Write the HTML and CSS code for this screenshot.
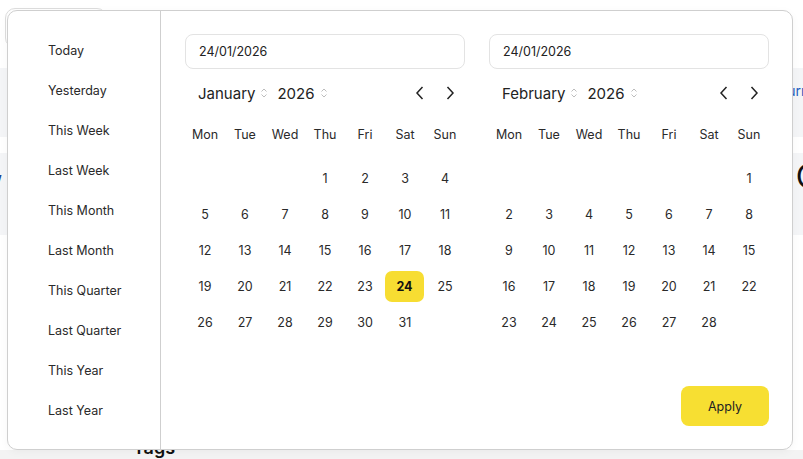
FILE: index.html
```html
<!DOCTYPE html>
<html lang="en">
<head>
  <meta charset="UTF-8" />
  <title>Date Range</title>
  <link rel="stylesheet" href="styles.css">
</head>
<body>

  <div class="page">
    <div class="toolbar">
      <div class="search"></div>
    </div>
    <div class="band band-top">
      <span class="link">Current</span>
    </div>
    <div class="band band-mid">
      <span class="link-left">view</span>
      <span class="big-icon">C</span>
    </div>
    <div class="tags">
      <h3>Tags</h3>
    </div>
  </div>

  <!-- range picker popover -->
  <div class="picker">
    <ul class="presets">
      <li>Today</li>
      <li>Yesterday</li>
      <li>This Week</li>
      <li>Last Week</li>
      <li>This Month</li>
      <li>Last Month</li>
      <li>This Quarter</li>
      <li>Last Quarter</li>
      <li>This Year</li>
      <li>Last Year</li>
    </ul>

    <div class="panel">
      <div class="months">
        <div class="month" id="m1">
          <div class="date-input">24/01/2026</div>
          <div class="month-head">
            <span class="sel">January <svg class="updown" viewBox="0 0 8 12"><path d="M1.5 4.5 4 2l2.5 2.5M1.5 7.5 4 10l2.5-2.5"/></svg></span>
            <span class="sel">2026 <svg class="updown" viewBox="0 0 8 12"><path d="M1.5 4.5 4 2l2.5 2.5M1.5 7.5 4 10l2.5-2.5"/></svg></span>
            <span class="nav">
              <button class="arrow"><svg viewBox="0 0 10 16"><path d="M7.5 2 2 8l5.5 6"/></svg></button>
              <button class="arrow"><svg viewBox="0 0 10 16"><path d="M2.5 2 8 8l-5.5 6"/></svg></button>
            </span>
          </div>
          <div class="weekdays"></div>
          <div class="days"></div>
        </div>

        <div class="month" id="m2">
          <div class="date-input">24/01/2026</div>
          <div class="month-head">
            <span class="sel">February <svg class="updown" viewBox="0 0 8 12"><path d="M1.5 4.5 4 2l2.5 2.5M1.5 7.5 4 10l2.5-2.5"/></svg></span>
            <span class="sel">2026 <svg class="updown" viewBox="0 0 8 12"><path d="M1.5 4.5 4 2l2.5 2.5M1.5 7.5 4 10l2.5-2.5"/></svg></span>
            <span class="nav">
              <button class="arrow"><svg viewBox="0 0 10 16"><path d="M7.5 2 2 8l5.5 6"/></svg></button>
              <button class="arrow"><svg viewBox="0 0 10 16"><path d="M2.5 2 8 8l-5.5 6"/></svg></button>
            </span>
          </div>
          <div class="weekdays"></div>
          <div class="days"></div>
        </div>
      </div>

      <div class="actions">
        <button class="apply">Apply</button>
      </div>
    </div>
  </div>

  <script>
    const names = ["Mon", "Tue", "Wed", "Thu", "Fri", "Sat", "Sun"];

    function buildMonth(el, offset, count, selected) {
      const head = el.querySelector(".weekdays");
      const grid = el.querySelector(".days");
      names.forEach(d => {
        const c = document.createElement("div");
        c.className = "wd";
        c.textContent = d;
        head.appendChild(c);
      });
      for (let i = 0; i < offset; i++) {
        grid.appendChild(document.createElement("div"));
      }
      for (let n = 1; n <= count; n++) {
        const c = document.createElement("div");
        c.className = "day" + (n === selected ? " active" : "");
        c.textContent = n;
        grid.appendChild(c);
      }
    }

    // Jan 2026 starts on a Thursday, Feb 2026 on a Sunday
    buildMonth(document.getElementById("m1"), 3, 31, 24);
    buildMonth(document.getElementById("m2"), 6, 28, 0);
  </script>
</body>
</html>
```

FILE: styles.css
```css
* {
  box-sizing: border-box;
}

html, body {
  margin: 0;
  padding: 0;
  font-family: 'Inter', sans-serif;
  background: #fff;
  color: #222;
  height: 100%;
  overflow: hidden;
}

.page {
  padding-top: 8px;
}

.toolbar {
  height: 60px;
}

.search {
  margin-left: 5px;
  width: 102px;
  height: 40px;
  border: 1px solid #ddd;
  border-radius: 10px;
}

.band {
  background: #f4f5f7;
  display: flex;
  justify-content: space-between;
  align-items: center;
}

.band-top {
  height: 69px;
}

.band-mid {
  margin-top: 16px;
  height: 82px;
}

.link {
  margin-left: auto;
  margin-right: -24px;
  margin-top: -24px;
  color: #1d5fc2;
  font-size: 14px;
}

.link-left {
  margin-left: -30px;
  margin-top: -34px;
  color: #1d3f8f;
  font-size: 14px;
  font-weight: 600;
}

.big-icon {
  margin-right: -16px;
  margin-top: -36px;
  font-size: 32px;
  color: #111;
}

.tags {
  margin-top: 203px;
  height: 40px;
  background: linear-gradient(#fff 0, #fff 12px, #f3f3f3 12px);
}

.tags h3 {
  margin: 0 0 0 133px;
  font-size: 18px;
  line-height: 20px;
  font-weight: 600;
  color: #111;
}

/* popover */
.picker {
  position: absolute;
  left: 7px;
  top: 10px;
  width: 786px;
  height: 440px;
  display: flex;
  background: #fff;
  border: 1px solid #cfcfcf;
  border-radius: 10px;
  box-shadow: 0 2px 8px rgba(0, 0, 0, 0.04);
}

.presets {
  list-style: none;
  margin: 0;
  padding: 20px 0 0 40px;
  width: 153px;
  border-right: 1px solid #cfcfcf;
}

.presets li {
  height: 40px;
  line-height: 40px;
  font-size: 12.5px;
  color: #2a2a2a;
}

.panel {
  flex: 1;
  display: flex;
  flex-direction: column;
  padding: 23px 23px 23px 24px;
}

.months {
  display: flex;
  gap: 24px;
}

.month {
  width: 280px;
}

.date-input {
  height: 35px;
  border: 1px solid #e3e3e3;
  border-radius: 8px;
  padding: 0 13px;
  line-height: 33px;
  font-size: 12.5px;
  color: #222;
}

.month-head {
  margin-top: 6px;
  height: 36px;
  display: flex;
  align-items: center;
  padding-left: 13px;
  font-size: 15px;
  color: #222;
}

.sel {
  display: flex;
  align-items: center;
  gap: 5px;
  margin-right: 9px;
}

.updown {
  width: 8px;
  height: 12px;
  fill: none;
  stroke: #b5b5b5;
  stroke-width: 0.9;
}

.nav {
  margin-left: auto;
  display: flex;
}

.arrow {
  width: 30px;
  height: 30px;
  padding: 0;
  border: none;
  background: none;
  display: flex;
  align-items: center;
  justify-content: center;
}

.arrow svg {
  width: 10px;
  height: 16px;
  fill: none;
  stroke: #222;
  stroke-width: 1.5;
}

.weekdays,
.days {
  display: grid;
  grid-template-columns: repeat(7, 40px);
  grid-auto-rows: 36px;
}

.weekdays {
  margin-top: 5px;
  margin-bottom: 8px;
}

.wd,
.day {
  display: flex;
  align-items: center;
  justify-content: center;
  font-size: 12.5px;
  color: #2a2a2a;
}

.day.active {
  background: #f7dd32;
  border-radius: 7px;
  font-weight: 700;
  color: #111;
  margin: 3px 0 2px 0;
  width: 39px;
}

.actions {
  margin-top: auto;
  display: flex;
  justify-content: flex-end;
}

.apply {
  width: 88px;
  height: 40px;
  border: none;
  border-radius: 8px;
  background: #f7df32;
  font-family: 'Inter', sans-serif;
  font-size: 12.5px;
  color: #222;
}
```
